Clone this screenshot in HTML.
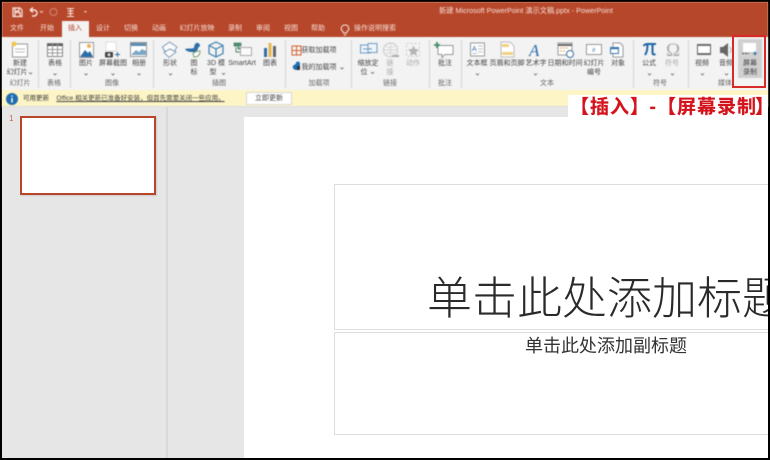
<!DOCTYPE html>
<html lang="zh"><head><meta charset="utf-8"><style>
html,body{margin:0;padding:0;background:#000}
#p{position:relative;width:770px;height:460px;overflow:hidden;background:#000;font-family:"Liberation Sans","Noto Sans CJK SC",sans-serif}
#p div,#p span,#p svg{position:absolute}
.c{transform:translateX(-50%);white-space:nowrap;font-size:7px;line-height:9px;color:#444}
.g{color:#666}
.d{color:#aaa}
.t{transform:translateX(-50%);white-space:nowrap;font-size:7px;line-height:10px;color:#f6dfd8}
.s{position:absolute;top:40px;height:48px;width:1px;background:#d4d4d4}
.r{top:95px;white-space:nowrap;font-size:19px;line-height:26px;font-weight:700;color:#d3141c;letter-spacing:1px;-webkit-text-stroke:.2px #d3141c}
#blur{left:0;top:0;width:770px;height:117px;filter:blur(.4px)}
</style></head><body><div id="p">
<div id="main" style="left:2px;top:2px;width:766px;height:456px;background:#e6e6e6"></div>
<div style="left:166px;top:107px;width:2px;height:351px;background:#d9d9d9"></div>

<div id="blur">
<div style="left:2px;top:2px;width:766px;height:35px;background:#b7472a"></div>
<div style="left:2px;top:37px;width:766px;height:53px;background:#f3f3f3"></div>
<div style="left:2px;top:90px;width:766px;height:17px;background:#fdf5c6"></div>
<div style="left:2px;top:106px;width:766px;height:1px;background:#ddd"></div>
<div style="left:62px;top:21px;width:27px;height:17px;background:#f3f3f3"></div>

<span class="t" style="left:526px;top:6px;font-size:7.2px">新建 Microsoft PowerPoint 演示文稿.pptx  -  PowerPoint</span>
<span class="t" style="left:17px;top:24px">文件</span>
<span class="t" style="left:47px;top:24px">开始</span>
<span class="t" style="left:75px;top:24px;color:#b7472a">插入</span>
<span class="t" style="left:103px;top:24px">设计</span>
<span class="t" style="left:131px;top:24px">切换</span>
<span class="t" style="left:159px;top:24px">动画</span>
<span class="t" style="left:197px;top:24px">幻灯片放映</span>
<span class="t" style="left:235px;top:24px">录制</span>
<span class="t" style="left:263px;top:24px">审阅</span>
<span class="t" style="left:291px;top:24px">视图</span>
<span class="t" style="left:318px;top:24px">帮助</span>
<span class="t" style="left:375px;top:24px">操作说明搜索</span>

<i class="s" style="left:38px"></i><i class="s" style="left:70px"></i><i class="s" style="left:153px"></i><i class="s" style="left:285px"></i><i class="s" style="left:351px"></i><i class="s" style="left:429px"></i><i class="s" style="left:461px"></i><i class="s" style="left:633px"></i><i class="s" style="left:688px"></i>

<div style="left:738px;top:39px;width:24px;height:39px;background:#d0d0d0"></div>

<svg style="left:0;top:0" width="770" height="117" viewBox="0 0 770 117" fill="none">
<!-- QAT -->
<path d="M13 8h7l2 2v6.500H13zM15 8v3h4V8M15 16.500v-4h5v4" stroke="#f6e6e0" stroke-width="1.200"/>
<path d="M30 10h4a3 3 0 0 1 0 6h-2M30 10l3-2.500M30 10l3 2.500" stroke="#f6e6e0" stroke-width="1.400"/>
<path d="M40 11l1.500 1.500 1.500-1.500" stroke="#eac4b8"/>
<circle cx="53.500" cy="12" r="3.500" stroke="#cf8a76"/>
<path d="M67 8.500h7M67.500 11h6M70.500 8v9M67.500 13.500h6M67 16.500h7" stroke="#f6dcd2" stroke-width="1.100"/>
<path d="M84 11h3l-1.500 2z" fill="#f0d0c5"/>
<!-- bulb -->
<path d="M345 25a3.500 3.500 0 0 1 2 6.500l-.5 1.500h-3l-.5-1.500a3.500 3.500 0 0 1 2-6.500zM343.800 35h2.400" stroke="#f6e6e0"/>
<!-- new slide -->
<rect x="12.500" y="44" width="15" height="13" fill="#fff" stroke="#999"/><path d="M15 49h10M15 52h10" stroke="#bbb"/>
<circle cx="14" cy="44" r="2.500" fill="#f0c850"/>
<!-- table -->
<rect x="47.500" y="43.500" width="15" height="13" fill="#fff" stroke="#888"/><path d="M47 45h16" stroke="#555" stroke-width="2"/><path d="M47 49.500h16M47 53h16M52.500 44v13M57.500 44v13" stroke="#999"/>
<!-- picture -->
<rect x="79.500" y="42.500" width="14" height="15" fill="#fff" stroke="#999"/>
<path d="M80 57l5-7 3 3 2-2 3 6z" fill="#2d6ea8"/><circle cx="89" cy="46" r="2" fill="#f0b25a"/>
<!-- screenshot -->
<path d="M106 42h10v9h-10z" fill="#fff" stroke="#ddd"/>
<rect x="105" y="52" width="8" height="5.500" rx="1" fill="#444"/><circle cx="109" cy="54.700" r="1.500" fill="#ddd"/>
<path d="M115 54.500h5M117.500 52v5" stroke="#2f6fa8"/>
<!-- album -->
<rect x="130.500" y="42.500" width="16" height="14" fill="#fff" stroke="#999"/><rect x="131" y="43" width="15" height="3" fill="#5d8fb3"/><path d="M131 55l5-5 3 2 3-3 4 2v4h-15z" fill="#7da7c4"/>
<!-- shapes -->
<path d="M162.500 47l7-5 7.500 5-2.500 4-5 1-5-1z" stroke="#7f9cba" fill="#fafafa"/><path d="M170 49l6 3-7 5.500-5-5z" stroke="#7f9cba" fill="#fafafa"/>
<!-- icons -->
<path d="M185 49c3-1 6 0 9-1 0-3 2-6 4-5s2 2 2 3l-2 2c0 3-3 5-6 4-3 0-6-1-7-3z" fill="#2f6fa8"/><path d="M193 54c2-3 6-3 7-3 0 3-1 6-6 6z" stroke="#7b9d75" fill="#fff"/>
<!-- 3D -->
<path d="M216 42l7 3.500v8l-7 3.500-7-3.500v-8zM209 45.500l7 3.500 7-3.500M216 49v8" stroke="#3d7dad" stroke-width="1.200"/>
<!-- SmartArt -->
<path d="M234 43h7v3h-7zM238 46v3h3" stroke="#4d8a6b" fill="#4d8a6b" stroke-width=".8"/><path d="M236 47v5h4" stroke="#4d8a6b"/>
<rect x="240.500" y="47.500" width="11" height="8" fill="#fafafa" stroke="#aaa"/>
<!-- chart -->
<path d="M264 48h3v9h-3z" fill="#2f6fa8"/><path d="M268.500 43h3v14h-3z" fill="#e8b54d"/><path d="M273 46h3v11h-3z" fill="#666"/>
<!-- addins -->
<path d="M292 46h9v9h-9zM296.500 46v9M292 50.500h9" stroke="#d1622f"/>
<path d="M293 66c1-2 3-1 3-3s3-2 4 0v7h-4c-2 0-4-2-3-4z" fill="#1f6fb5"/><path d="M297 66h3v4h-3z" fill="#333"/>
<!-- zoom -->
<rect x="360.500" y="45" width="10" height="8" stroke="#6d9cc4" fill="#eef3f8"/><rect x="368" y="43.500" width="9" height="9" stroke="#6d9cc4" fill="#eef3f8"/><path d="M363 49h8l-1-1" stroke="#6d9cc4"/>
<!-- link -->
<circle cx="390.500" cy="50" r="7" stroke="#c8c8c8"/><path d="M384 50h13M390.500 43v14M386 46c3 2 6 2 9 0M386 54c3-2 6-2 9 0" stroke="#cfcfcf" stroke-width=".7"/>
<path d="M392 56h7" stroke="#aaa" stroke-width="2"/>
<!-- action -->
<rect x="406.500" y="43.500" width="13" height="13" stroke="#ccc" stroke-dasharray="2 2"/><path d="M413.500 45.500l1.700 3.500 3.800.5-2.800 2.600.7 3.800-3.400-1.900-3.400 1.900.7-3.800-2.800-2.600 3.800-.5z" fill="#b5b5b5"/>
<!-- comment -->
<path d="M438 45.500h15v9h-8l-3 3v-3h-4z" stroke="#999" fill="#fff"/><path d="M440 45h-6M437 42v6" stroke="#3f8f68" stroke-width="1.800"/>
<!-- textbox -->
<rect x="470.500" y="43" width="14" height="13" fill="#fff" stroke="#999"/><text x="472" y="51" font-size="7" fill="#2f6fa8" font-family="Liberation Sans">A</text><path d="M478 46h5M478 49h5M478 52h5M472 53.500h5" stroke="#aaa" stroke-width=".8"/>
<!-- header footer -->
<path d="M501 42h9l4 4v11h-13z" fill="#fff" stroke="#bbb"/><path d="M502 44h7v3h-7zM502 52h11v3h-11z" fill="#f1d084"/>
<!-- wordart -->
<text x="529" y="56" font-size="17" font-style="italic" fill="#2c6cab" font-family="Liberation Serif">A</text>
<!-- date -->
<rect x="558" y="43" width="14" height="12" stroke="#999" fill="#fff"/><path d="M558 45h14" stroke="#666" stroke-width="2"/><path d="M560 48h2M563 48h2M566 48h2M560 51h2M563 51h2" stroke="#e0a85a"/>
<circle cx="570" cy="54" r="3.500" fill="#fff" stroke="#3672a5"/>
<!-- slide no -->
<rect x="586.500" y="44.500" width="15" height="10" fill="#fff" stroke="#999"/><text x="592" y="52" font-size="6" font-style="italic" fill="#2c6cab" font-family="Liberation Sans">#</text>
<!-- object -->
<path d="M613 43h7l3 3v11h-10z" fill="#fff" stroke="#999"/><rect x="610.500" y="47.500" width="8" height="6" fill="#fff" stroke="#3a78ad"/><path d="M611 48.500h7" stroke="#3a78ad" stroke-width="1.500"/>
<!-- pi -->
<path d="M643.500 46c1-1.500 2-2 4-2h8.500M647.500 44.500c0 4-.5 8-2.500 10.500M652.500 44.500v8c0 2 1 2.500 3 1.500" stroke="#1f66a5" stroke-width="2"/>
<!-- media -->
<rect x="697.500" y="44.500" width="13" height="10" fill="#fff" stroke="#666"/><path d="M697 45.500h14M697 53.500h14" stroke="#777"/>
<path d="M720 47h3l5-4v14l-5-4h-3z" fill="#666"/><path d="M730 47c1.500 2 1.500 4 0 6" stroke="#aaa"/>
<!-- screen record -->
<rect x="743" y="43" width="13" height="9" fill="#fff"/>
<path d="M742 53.500h2M745 53.500h2M748 53.500h1" stroke="#444"/><path d="M753 53.500h4M755 51.500v4" stroke="#2f6fa8"/>
<!-- carets -->
<g stroke="#666" stroke-width=".8">
<path d="M29 72.500l1.500 1.500 1.500-1.500M53.500 73.500l1.500 1.500 1.500-1.500M84.500 73.500l1.500 1.500 1.500-1.500M111.500 73.500l1.500 1.500 1.500-1.500M137.500 73.500l1.500 1.500 1.500-1.500M169 73.500l1.500 1.500 1.500-1.500M222 73l1.500 1.500 1.500-1.500M340.500 67.500l1.500 1.500 1.500-1.500M371 72l1.500 1.500 1.500-1.500M476 73.500l1.500 1.500 1.500-1.500M534 73.500l1.500 1.500 1.500-1.500M648 73.500l1.500 1.500 1.500-1.500M671 73.500l1.500 1.500 1.500-1.500M701 73.500l1.500 1.500 1.500-1.500M725 73.500l1.500 1.500 1.500-1.500"/>
</g>
<!-- info -->
<circle cx="12" cy="99" r="6" fill="#1f6db0"/><path d="M12 95.500v1.300M12 98v4.500" stroke="#fff" stroke-width="1.500"/>
</svg>
<span style="left:666px;top:41px;font:19px/20px 'Liberation Serif',serif;color:#aaa">Ω</span>

<span class="c" style="left:20px;top:59px">新建</span><span class="c" style="left:17px;top:68px">幻灯片</span>
<span class="c" style="left:55px;top:59px">表格</span>
<span class="c" style="left:86px;top:59px">图片</span>
<span class="c" style="left:113px;top:59px">屏幕截图</span>
<span class="c" style="left:139px;top:59px">相册</span>
<span class="c" style="left:170px;top:59px">形状</span>
<span class="c" style="left:194px;top:59px">图</span><span class="c" style="left:194px;top:68px">标</span>
<span class="c" style="left:216px;top:59px">3D 模</span><span class="c" style="left:213px;top:68px">型</span>
<span class="c" style="left:242px;top:59px">SmartArt</span>
<span class="c" style="left:270px;top:59px">图表</span>
<span class="c" style="left:319px;top:46px">获取加载项</span>
<span class="c" style="left:319px;top:63px">我的加载项</span>
<span class="c" style="left:368px;top:59px">缩放定</span><span class="c" style="left:364px;top:68px">位</span>
<span class="c d" style="left:390px;top:59px">链</span><span class="c d" style="left:390px;top:68px">接</span>
<span class="c d" style="left:413px;top:59px">动作</span>
<span class="c" style="left:445px;top:59px">批注</span>
<span class="c" style="left:477px;top:59px">文本框</span>
<span class="c" style="left:507px;top:59px">页眉和页脚</span>
<span class="c" style="left:536px;top:59px">艺术字</span>
<span class="c" style="left:565px;top:59px">日期和时间</span>
<span class="c" style="left:594px;top:59px">幻灯片</span><span class="c" style="left:594px;top:68px">编号</span>
<span class="c" style="left:618px;top:59px">对象</span>
<span class="c" style="left:649px;top:59px">公式</span>
<span class="c d" style="left:672px;top:59px">符号</span>
<span class="c" style="left:702px;top:59px">视频</span>
<span class="c" style="left:726px;top:59px">音频</span>
<span class="c" style="left:750px;top:59px">屏幕</span><span class="c" style="left:750px;top:68px">录制</span>

<span class="c g" style="left:20px;top:79px">幻灯片</span>
<span class="c g" style="left:54px;top:79px">表格</span>
<span class="c g" style="left:112px;top:79px">图像</span>
<span class="c g" style="left:219px;top:79px">插图</span>
<span class="c g" style="left:319px;top:79px">加载项</span>
<span class="c g" style="left:390px;top:79px">链接</span>
<span class="c g" style="left:445px;top:79px">批注</span>
<span class="c g" style="left:547px;top:79px">文本</span>
<span class="c g" style="left:660px;top:79px">符号</span>
<span class="c g" style="left:725px;top:79px">媒体</span>

<span class="c" style="left:36px;top:94px;color:#333;font-size:6.500px">可用更新</span>
<span class="c" style="left:140.500px;top:94px;color:#444;font-size:6.500px;text-decoration:underline">Office 相关更新已准备好安装，但首先需要关闭一些应用。</span>
<div style="left:246px;top:92px;width:46px;height:13px;background:#fff;border:1px solid #d8d8d8;box-sizing:border-box"></div>
<span class="c" style="left:269px;top:94px">立即更新</span>
</div>

<!-- slide panel -->
<span style="left:9px;top:114px;font-size:8px;line-height:10px;color:#c2694f">1</span>
<div style="left:20px;top:116px;width:136px;height:79px;box-sizing:border-box;background:#fff;border:2px solid #b7472a;box-shadow:1px 1px 1px #ccc"></div>

<!-- slide -->
<div style="left:244px;top:117px;width:524px;height:341px;background:#fff;overflow:hidden">
<div style="left:90px;top:67px;width:500px;height:146px;box-sizing:border-box;border:1.5px solid #ddd"></div>
<div style="left:90px;top:215px;width:500px;height:103px;box-sizing:border-box;border:1.5px solid #ddd"></div>
<span style="left:183px;top:150px;white-space:nowrap;font-size:45px;line-height:64px;font-weight:200;color:#2a2a2a">单击此处添加标题</span>
<span style="left:281px;top:216px;white-space:nowrap;font-size:18px;line-height:26px;font-weight:400;color:#333">单击此处添加副标题</span>
</div>
<div style="left:0;top:458px;width:770px;height:2px;background:#000"></div>

<!-- annotation -->
<div style="left:568px;top:95px;width:200px;height:22px;background:#fff"></div>
<span class="r" style="left:570px">【插入】</span>
<span class="r" style="left:649.500px">-</span>
<span class="r" style="left:657px">【屏幕录制</span>
<span class="r" style="left:755px">】</span>
<div style="left:732px;top:35px;width:34px;height:53px;box-sizing:border-box;border:2px solid #d92a2a"></div>
</div></body></html>
